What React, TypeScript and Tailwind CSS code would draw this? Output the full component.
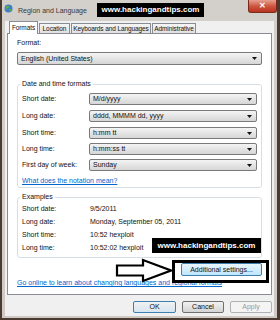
const dateRows = [
  { label: 'Short date:', value: 'M/d/yyyy', mt: 'mt-[4px]' },
  { label: 'Long date:', value: 'dddd, MMMM dd, yyyy', mt: 'mt-[5px]' },
  { label: 'Short time:', value: 'h:mm tt', mt: 'mt-[5px]' },
  { label: 'Long time:', value: 'h:mm:ss tt', mt: 'mt-[4px]' },
  { label: 'First day of week:', value: 'Sunday', mt: 'mt-[4px]' },
];

const examples = [
  { label: 'Short date:', value: '9/5/2011' },
  { label: 'Long date:', value: 'Monday, September 05, 2011' },
  { label: 'Short time:', value: '10:52 hexploit' },
  { label: 'Long time:', value: '10:52:02 hexploit' },
];

const tabs = [
  { name: 'Formats', w: 'w-[29px]', active: true },
  { name: 'Location', w: 'w-[31px]', active: false },
  { name: 'Keyboards and Languages', w: 'w-[80px]', active: false },
  { name: 'Administrative', w: 'w-[44px]', active: false },
];

const Combo = ({ value, h = 'h-[12px]' }: { value: string; h?: string }) => (
  <div className={`flex flex-1 ${h} items-center justify-between rounded-[2px] border border-[#7a7a7a] bg-gradient-to-b from-[#f4f4f4] to-[#d6d6d6] pl-[3px] pr-[4px]`}>
    <span>{value}</span>
    <svg width="5" height="3" viewBox="0 0 5 3">
      <path d="M0 0h5L2.5 3z" fill="#111" />
    </svg>
  </div>
);

const Watermark = ({ className }: { className: string }) => (
  <div className={`absolute flex items-center justify-center bg-black text-[8px] font-bold text-white ${className}`}>
    www.hackingandtips.com
  </div>
);

export default function App() {
  return (
    <div className="relative h-[320px] w-[280px] overflow-hidden bg-[#4b3a31] font-['Liberation_Sans',Arial,sans-serif] text-[7px] leading-[10px] text-[#111]">
      <div className="ml-[2px] flex h-[318px] w-[275px] flex-col bg-gradient-to-b from-[#d3cfca] to-[#cfcac4] px-[3px] pb-[2px]">
        {/* title bar */}
        <div className="-mx-[3px] flex h-[21px] items-start">
          <svg className="ml-[2px] mt-[4px]" width="9" height="9" viewBox="0 0 9 9">
            <circle cx="4.5" cy="4.5" r="4" fill="#3f7fc6" />
            <path d="M2 2.5c1-1 2.5-.8 3 0s-.5 1.5-1.5 1.8S2 5.5 2.5 6.5C1.5 6 1.2 3.5 2 2.5z" fill="#5bb04a" />
            <path d="M6 5c.8 0 1.5.4 1.2 1.3S5.6 7.8 5.3 7 5.3 5 6 5z" fill="#5bb04a" />
          </svg>
          <span className="ml-[5px] mt-[6px] text-[7px] text-[#3a3a3a]">Region and Language</span>
          <div className="ml-auto flex h-[13px] w-[29px] items-center justify-center rounded-b-[3px] border border-t-0 border-[#7a2a1c] bg-gradient-to-b from-[#e5a090] via-[#cf5640] to-[#b8321f] text-[8px] font-bold leading-none text-white">
            ✕
          </div>
        </div>

        {/* dialog body */}
        <div className="flex h-[295px] flex-col bg-[#f0f0f0] px-[2px]">
          <div className="flex h-[12px] items-end gap-[1px] whitespace-nowrap pl-[2px] text-[6.5px] tracking-[-0.1px]">
            {tabs.map((t) =>
              t.active ? (
                <div key={t.name} className={`relative z-10 -mb-[1px] flex h-[13px] ${t.w} items-center justify-center border border-b-0 border-[#898c95] bg-white`}>
                  {t.name}
                </div>
              ) : (
                <div key={t.name} className={`flex h-[10px] ${t.w} items-center justify-center border border-b-0 border-[#898c95] bg-gradient-to-b from-[#f5f5f5] to-[#e1e1e1]`}>
                  {t.name}
                </div>
              )
            )}
          </div>

          <div className="flex h-[262px] flex-col border border-[#898c95] bg-white px-[9px]">
            <div className="mt-[4px]">Format:</div>
            <div className="mt-[4px] flex">
              <Combo value="English (United States)" h="h-[13px]" />
            </div>

            <fieldset className="mt-[14px] rounded-[3px] border border-[#d5dfe5] pb-[1px] pl-[4px] pr-[4px]">
              <legend className="-ml-[2px] px-[2px]">Date and time formats</legend>
              {dateRows.map((r) => (
                <div key={r.label} className={`${r.mt} flex h-[12px] items-center`}>
                  <span className="w-[67px]">{r.label}</span>
                  <Combo value={r.value} />
                </div>
              ))}
              <div className="mt-[5px] text-[#0066cc] underline">What does the notation mean?</div>
            </fieldset>

            <fieldset className="mt-[4px] rounded-[3px] border border-[#d5dfe5] pb-[3px] pl-[4px] pr-[4px]">
              <legend className="-ml-[2px] px-[2px]">Examples</legend>
              {examples.map((r) => (
                <div key={r.label} className="flex leading-[13px]">
                  <span className="w-[68px]">{r.label}</span>
                  <span>{r.value}</span>
                </div>
              ))}
            </fieldset>

            <div className="mt-[5px] flex justify-end">
              <button className="h-[13px] w-[81px] rounded-[2px] border border-[#3c7fb1] bg-gradient-to-b from-[#eaf6fd] to-[#bee6fd] text-[7px]">
                Additional settings...
              </button>
            </div>
            <div className="mt-[2px] whitespace-nowrap text-[#0066cc] underline">
              Go online to learn about changing languages and regional formats
            </div>
          </div>

          <div className="mt-[6px] flex justify-end gap-[6px]">
            <button className="h-[12px] w-[43px] rounded-[2px] border border-[#3c7fb1] bg-gradient-to-b from-[#f2f2f2] to-[#d6e5f0] text-[7px]">
              OK
            </button>
            <button className="h-[12px] w-[42px] rounded-[2px] border border-[#707070] bg-gradient-to-b from-[#f2f2f2] to-[#d4d4d4] text-[7px]">
              Cancel
            </button>
            <button className="h-[12px] w-[42px] rounded-[2px] border border-[#adb2b5] bg-[#f4f4f4] text-[7px] text-[#9a9a9a]">
              Apply
            </button>
          </div>
        </div>
      </div>

      {/* overlays added on the screenshot */}
      <Watermark className="left-[97px] top-[3px] h-[14px] w-[107px]" />
      <Watermark className="left-[152px] top-[238px] h-[15px] w-[109px]" />
      <svg className="absolute left-[115px] top-[258px]" width="58" height="25" viewBox="0 0 58 25">
        <path d="M2 7.5h26V2l28 10.5-28 10.5v-5.5H2z" fill="#fff" stroke="#000" strokeWidth="2.2" strokeLinejoin="miter" />
      </svg>
      <div className="absolute left-[172px] top-[260px] h-[23px] w-[97px] border-[3px] border-black" />
    </div>
  );
}
